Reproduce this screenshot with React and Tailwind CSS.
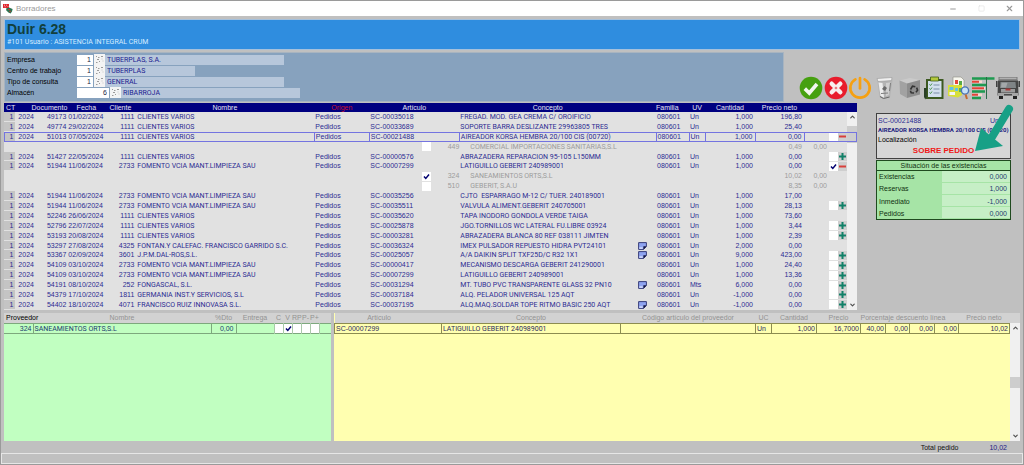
import { Fragment } from "react";
import { ChevronDown, ChevronUp, Minus, Square, X } from "lucide-react";

const fields = [
  { id: "empresa", label: "Empresa", code: "1", name: "TUBERPLAS, S.A.", codeW: "w-4", nameW: "w-[179px]" },
  { id: "centro", label: "Centro de trabajo", code: "1", name: "TUBERPLAS", codeW: "w-4", nameW: "w-[90px]" },
  { id: "tipo", label: "Tipo de consulta", code: "1", name: "GENERAL", codeW: "w-4", nameW: "w-[179px]" },
  { id: "almacen", label: "Almacén", code: "6", name: "RIBARROJA", codeW: "w-8", nameW: "w-[179px]" },
];

const FOMENTO = "FOMENTO VCIA MANT.LIMPIEZA SAU";

// mark: "+" can be expanded, "-" is expanded
const orders = [
  { doc: "49173", date: "01/02/2024", client: "1111", name: "CLIENTES VARIOS", art: "SC-00035018", text: "FREGAD. MOD. GEA CREMA C/ OROIFICIO", qty: "1,000", price: "196,80" },
  { doc: "49774", date: "29/02/2024", client: "1111", name: "CLIENTES VARIOS", art: "SC-00033689", text: "SOPORTE BARRA DESLIZANTE 29963805 TRES", qty: "1,000", price: "25,40" },
  {
    doc: "51013", date: "07/05/2024", client: "1111", name: "CLIENTES VARIOS", art: "SC-00021488", text: "AIREADOR KORSA HEMBRA 20/100 CIS (00720)", qty: "1,000", price: "0,00", mark: "-", selected: true,
    offers: [{ code: "449", name: "COMERCIAL IMPORTACIONES SANITARIAS,S.L", price: "0,49", dto: "0,00" }],
  },
  { doc: "51427", date: "22/05/2024", client: "1111", name: "CLIENTES VARIOS", art: "SC-00000576", text: "ABRAZADERA REPARACION 95-105 L150MM", qty: "1,000", price: "0,00", mark: "+" },
  {
    doc: "51944", date: "11/06/2024", client: "2733", name: FOMENTO, art: "SC-00007299", text: "LATIGUILLO GEBERIT 240989001", qty: "1,000", price: "0,00", mark: "-", checked: true,
    offers: [
      { code: "324", name: "SANEAMIENTOS ORTS,S.L", price: "10,02", dto: "0,00", checked: true },
      { code: "510", name: "GEBERIT, S.A.U", price: "8,35", dto: "0,00" },
    ],
  },
  { doc: "51944", date: "11/06/2024", client: "2733", name: FOMENTO, art: "SC-00035256", text: "CJTO  ESPARRAGO M-12 C/ TUER. 240189001", qty: "1,000", price: "17,00" },
  { doc: "51944", date: "11/06/2024", client: "2733", name: FOMENTO, art: "SC-00035511", text: "VALVULA ALIMENT.GEBERIT 240705001", qty: "1,000", price: "28,13", mark: "+" },
  { doc: "52246", date: "26/06/2024", client: "1111", name: "CLIENTES VARIOS", art: "SC-00035620", text: "TAPA INODORO GONDOLA VERDE TAIGA", qty: "1,000", price: "73,60" },
  { doc: "52796", date: "22/07/2024", client: "1111", name: "CLIENTES VARIOS", art: "SC-00025878", text: "JGO.TORNILLOS WC LATERAL FU.LIBRE 03924", qty: "1,000", price: "3,44", mark: "+" },
  { doc: "53193", date: "20/08/2024", client: "1111", name: "CLIENTES VARIOS", art: "SC-00003281", text: "ABRAZADERA BLANCA 80 REF 038111 JIMTEN", qty: "1,000", price: "2,39", mark: "+" },
  { doc: "53297", date: "27/08/2024", client: "4325", name: "FONTAN.Y CALEFAC. FRANCISCO GARRIDO S.C.", art: "SC-00036324", text: "IMEX PULSADOR REPUESTO HIDRA PVT24101", note: true, qty: "2,000", price: "0,00" },
  { doc: "53367", date: "02/09/2024", client: "3601", name: "J.P.M.DAL-ROS,S.L.", art: "SC-00025057", text: "A/A DAIKIN SPLIT TXF25D/C R32 1X1", note: true, qty: "9,000", price: "423,00", mark: "+" },
  { doc: "54109", date: "03/10/2024", client: "2733", name: FOMENTO, art: "SC-00000417", text: "MECANISMO DESCARGA GEBERIT 241290001", qty: "1,000", price: "24,40", mark: "+" },
  { doc: "54109", date: "03/10/2024", client: "2733", name: FOMENTO, art: "SC-00007299", text: "LATIGUILLO GEBERIT 240989001", qty: "1,000", price: "13,36", mark: "+" },
  { doc: "54191", date: "08/10/2024", client: "252", name: "FONGASCAL, S.L.", art: "SC-00031294", text: "MT. TUBO PVC TRANSPARENTE GLASS 32 PN10", note: true, unit: "Mts", qty: "6,000", price: "0,00", mark: "+" },
  { doc: "54379", date: "17/10/2024", client: "1811", name: "GERMANIA INST.Y SERVICIOS, S.L", art: "SC-00037184", text: "ALQ. PELADOR UNIVERSAL 125 AQT", qty: "-1,000", price: "0,00", mark: "+" },
  { doc: "54402", date: "18/10/2024", client: "4071", name: "FRANCISCO RUIZ INNOVASA S.L.", art: "SC-00037195", text: "ALQ.MAQ.SOLDAR TOPE RITMO BASIC 250 AQT", note: true, qty: "-1,000", price: "0,00", mark: "+" },
];

const totalLines = orders.reduce((n, o) => n + 1 + (o.offers ? o.offers.length : 0), 0);

const stock = [
  ["Existencias", "0,000"],
  ["Reservas", "1,000"],
  ["Inmediato", "-1,000"],
  ["Pedidos", "0,000"],
];

function Tick({ checked, label }) {
  return (
    <span className="grid h-[9px] w-[9px] place-items-center bg-white">
      <input
        type="checkbox"
        aria-label={label}
        defaultChecked={checked}
        className="peer col-start-1 row-start-1 h-[9px] w-[9px] appearance-none"
      />
      <svg viewBox="0 0 9 9" className="pointer-events-none invisible col-start-1 row-start-1 h-[9px] w-[9px] peer-checked:visible">
        <path d="M2 4.4 3.8 6.4 7 2.6" fill="none" stroke="#000070" strokeWidth="1.5" />
      </svg>
    </span>
  );
}

function Toggle({ mark }) {
  return (
    <button type="button" aria-label={mark === "+" ? "Desplegar" : "Plegar"} className="block h-[9px] w-[9px] bg-[#cfcfcf]">
      <svg viewBox="0 0 9 9" className="h-[9px] w-[9px]">
        {mark === "+" ? (
          <path d="M4.5 1v7M1 4.5h7" stroke="#128068" strokeWidth="2" />
        ) : (
          <path d="M1 4.5h7" stroke="#d8403c" strokeWidth="2" />
        )}
      </svg>
    </button>
  );
}

function NoteButton() {
  return (
    <button type="button" aria-label="Nota" className="ml-[2px] block">
      <svg viewBox="0 0 9 8" className="h-2 w-[9px]">
        <path d="M.6.6h7.8v4L5.6 7.4H.6z" fill="#8fa4f0" stroke="#2b2f6e" strokeWidth=".9" />
        <path d="M1.3 5.4h3.4v1.4H1.3z" fill="#dfe6ff" />
        <path d="M8.4 4.3H5.4v3.2z" fill="#14163c" />
      </svg>
    </button>
  );
}

function LookupButton() {
  return (
    <button type="button" aria-label="Buscar" className="ml-px h-[11px] w-[11px] bg-[#f4f4f4]">
      <svg viewBox="0 0 11 11" className="h-[11px] w-[11px]" fill="none" stroke="#9a9a9a">
        <path d="M2 2.5h1M4 3.5h1.5M7 2.5h2M3 5.5h2M2 8.5h1.5M5 7.5h1" strokeWidth="1" />
        <path d="M7.5 5h1M8.5 7h1" stroke="#c4c4c4" strokeWidth="1" />
      </svg>
    </button>
  );
}

function Scrollbar({ before, thumb }) {
  return (
    <div className="flex h-full w-full flex-col items-center bg-[#f0f0f0]">
      <ChevronUp className="h-[10px] w-[7px] shrink-0 text-[#505050]" strokeWidth={4} />
      <div className={before} />
      <div className={"w-full shrink-0 bg-[#cdcdcd] " + thumb} />
      <div className="flex-1" />
      <ChevronDown className="h-[10px] w-[7px] shrink-0 text-[#505050]" strokeWidth={4} />
    </div>
  );
}

function TitleBar() {
  return (
    <div className="flex h-[15px] items-center bg-white pl-[2px] text-[8px] text-[#9a9a9a]">
      <svg viewBox="0 0 10 10" className="mr-[3px] h-[10px] w-[10px]">
        <path d="M0 0h6v4H0z" fill="#e0242c" />
        <path d="M1 1.2h1M3 1.2h.8M4.6 2.4h.8M1.6 2.8h1" stroke="#fff" strokeWidth=".7" />
        <path d="M3 4.5 6 3.6 9.6 5 9 7.4 7.6 9.6 5.4 8.6 3.4 6.6z" fill="#2a7350" />
        <path d="M5 5.5h2M6 7.3h2" stroke="#c43a32" strokeWidth=".9" />
      </svg>
      <span className="flex-1">Borradores</span>
      <button type="button" aria-label="Minimizar" className="w-7">
        <Minus className="mx-auto h-2 w-2" strokeWidth={3} />
      </button>
      <button type="button" aria-label="Maximizar" className="w-7 text-[#e0e0e0]">
        <Square className="mx-auto h-[7px] w-[7px]" strokeWidth={2} />
      </button>
      <button type="button" aria-label="Cerrar" className="w-7">
        <X className="mx-auto h-[9px] w-[9px]" strokeWidth={3} />
      </button>
    </div>
  );
}

function Toolbar() {
  const btn = "block h-6 w-6 shrink-0";
  return (
    <div className="flex w-[236px] items-end justify-between pb-[2px] pl-[15px]">
      <button type="button" aria-label="Aceptar" className={btn}>
        <svg viewBox="0 0 24 24">
          <circle cx="12" cy="12" r="11.3" fill="#46a010" />
          <path d="M5.8 12.6 10.3 17 18 8" fill="none" stroke="#f2f6ee" strokeWidth="3.6" />
        </svg>
      </button>
      <button type="button" aria-label="Cancelar" className={btn}>
        <svg viewBox="0 0 24 24">
          <circle cx="12" cy="12" r="11.3" fill="#e81c2c" />
          <path d="M7.7 7.7l8.6 8.6M16.3 7.7l-8.6 8.6" stroke="#f8eeee" strokeWidth="4.4" strokeLinecap="round" />
          <path d="M12 10.4 13.6 12 12 13.6 10.4 12z" fill="#e86b72" />
        </svg>
      </button>
      <button type="button" aria-label="Salir" className={btn}>
        <svg viewBox="0 0 24 24" fill="none" stroke="#f5a012" strokeWidth="2.7" strokeLinecap="round">
          <path d="M7.4 3.4a9.7 9.7 0 1 0 9.2 0" />
          <path d="M12 2v10.5" />
        </svg>
      </button>
      <button type="button" aria-label="Papelera" className={btn}>
        <svg viewBox="0 0 24 24">
          <path d="M4 2.5 19 1.5 19.5 5 17 21.5 10 23 6.5 21z" fill="#b4b4b4" />
          <path d="M4 2.5 19 1.5 18.5 4.5 5 5.5z" fill="#f0f0f0" stroke="#9a9a9a" strokeWidth=".6" />
          <path d="M5.5 6.5 9.5 7 11 21.5 7.5 20z" fill="#ededed" />
          <path d="M13 7 17.5 6.5 15.6 19 13 20z" fill="#cfcfcf" />
          <path d="M9 13 11.5 10 14 12 12 15z" fill="#6a6a6a" />
          <path d="M8 17.5 15 17M17.5 7 16.5 15" stroke="#7d7d7d" strokeWidth="1" />
          <path d="M7 20.5 10.5 22.5 16.5 21" fill="none" stroke="#6a6a6a" strokeWidth="1" />
        </svg>
      </button>
      <button type="button" aria-label="Reciclar" className={btn}>
        <svg viewBox="0 0 24 24">
          <path d="M1.5 4.5 12 2 22 4 9 7.5z" fill="#cacaca" />
          <path d="M1.5 4.5 9 7.5V22L2 18z" fill="#a2a2a2" />
          <path d="M9 7.5 22 4V18.5L9 22z" fill="#8d8d8d" />
          <path d="M12.5 13.5l2-3.3 2.8.6M18.6 11.6l1 2.6-1.6 2M16 17l-2.8-.3-.8-2" fill="none" stroke="#333" strokeWidth="1.6" />
        </svg>
      </button>
      <button type="button" aria-label="Lista de tareas" className={btn}>
        <svg viewBox="0 0 24 24">
          <path d="M4 3h17.5v20H4z" fill="#3d5a22" />
          <path d="M6 5h13.5v16H6z" fill="#d3e0ee" />
          <path d="M8.5 1h8v4h-8z" fill="#b4c83c" stroke="#3f5a18" strokeWidth=".8" />
          <path d="M7.4 8.5l1.2 1 1.4-2M7.4 12.5l1.2 1 1.4-2M7.4 16.5l1.2 1 1.4-2" fill="none" stroke="#3a8a3a" strokeWidth=".9" />
          <path d="M11.5 9h6M11.5 13h6M11.5 17h6" stroke="#7d90a8" strokeWidth="1.1" />
          <path d="M2 12h2.6v9L3.3 23.5 2 21z" fill="#2a4028" />
        </svg>
      </button>
      <button type="button" aria-label="Consultar informe" className={btn}>
        <svg viewBox="0 0 24 24">
          <path d="M6 1h8l3 3v9H6z" fill="#f7f7ef" stroke="#8c8c80" strokeWidth=".6" />
          <path d="M1 9h14v10l-4 2.5L1 20z" fill="#d8df3a" />
          <path d="M8 4h3v4H8z" fill="#e0483c" />
          <path d="M12 5h3v4h-3z" fill="#58a848" />
          <path d="M2.5 11h4v3h-4zM8 12h3v3H8z" fill="#5fc3e6" />
          <path d="M2.5 16H8v3H2.5z" fill="#f4f4f4" />
          <path d="M12 12h4v4h-4z" fill="#58b05a" />
          <circle cx="18" cy="14.5" r="3.6" fill="#c9e2f8" stroke="#4a74b4" strokeWidth="1.4" />
          <path d="M18.6 18.5 20 23" stroke="#c46a32" strokeWidth="2" />
        </svg>
      </button>
      <button type="button" aria-label="Planificación" className={btn}>
        <svg viewBox="0 0 24 24">
          <path d="M1 2.5h22.5M1 9h15M1 15.5h13M1 22h9" stroke="#1e9a50" strokeWidth="2.4" />
          <path d="M1 5.7h10M1 12.2h13M1 18.8h10" stroke="#f6d8cc" strokeWidth="2.4" />
          <path d="M1 5.7h7M1 12.2h12M1 18.8h6" stroke="#e2433a" strokeWidth="2" />
          <path d="M15.5 1v22" stroke="#2b6a48" strokeWidth="1" />
        </svg>
      </button>
      <button type="button" aria-label="Transporte" className={btn}>
        <svg viewBox="0 0 24 24">
          <path d="M2.5 1h19v3.5H2.5z" fill="#7a7a7a" />
          <path d="M3.5 1.6h17v1.6h-17z" fill="#b0b0b0" />
          <path d="M2 4.5h20l.5 15h-21z" fill="#454545" />
          <path d="M4.5 6h15l.5 6H4z" fill="#7f8486" />
          <path d="M5.5 6.8h6l-1.5 4.6H5z" fill="#a4a8aa" />
          <path d="M5 13h14v3.5H5z" fill="#9c9c9c" />
          <path d="M9.5 12.5h5v2h-5z" fill="#a83c3c" />
          <path d="M2 17h20v3H2z" fill="#a6a6a6" />
          <path d="M8 18h8v1.5H8z" fill="#4a4a4a" />
          <path d="M3 20h4v3H3zM17 20h4v3h-4z" fill="#222" />
          <path d="M.8 5v6M23.2 5v6" stroke="#333" strokeWidth="1.4" />
        </svg>
      </button>
    </div>
  );
}

function OrdersTable() {
  return (
    <table className="h-[207px] min-w-0 flex-1 table-fixed border-collapse bg-[#e1e1e1] text-[#2c2c92]">
      <colgroup>
        <col className="w-[11px]" />
        <col className="w-[25px]" />
        <col className="w-[27px]" />
        <col className="w-[38px]" />
        <col className="w-[30px]" />
        <col className="w-[179px]" />
        <col className="w-[55px]" />
        <col className="w-[90px]" />
        <col />
        <col className="w-[20px]" />
        <col className="w-[33px]" />
        <col className="w-[16px]" />
        <col className="w-[50px]" />
        <col className="w-[49px]" />
        <col className="w-[25px]" />
        <col className="w-[9px]" />
        <col className="w-[9px]" />
        <col className="w-[10px]" />
      </colgroup>
      <thead>
        <tr className="h-[9px] bg-[#000080] text-[#e4e4f4] *:font-normal">
          <th className="pl-[2px] text-left">CT</th>
          <th colSpan={2} className="text-right">Documento</th>
          <th>Fecha</th>
          <th className="pr-[4px] text-right">Cliente</th>
          <th>Nombre</th>
          <th className="text-[#c8102c]">Origen</th>
          <th>Artículo</th>
          <th>Concepto</th>
          <th />
          <th className="text-left">Familia</th>
          <th>UV</th>
          <th>Cantidad</th>
          <th className="whitespace-nowrap">Precio neto</th>
          <th colSpan={4} />
        </tr>
      </thead>
      <tbody className="leading-[6px]">
        {orders.map((o, i) => {
          const line = o.selected ? " border-l border-[#7474e0]" : "";
          return (
            <Fragment key={i}>
              <tr className={"h-[9px] align-baseline whitespace-pre" + (o.selected ? " outline outline-1 -outline-offset-1 outline-[#7474e0]" : "")}>
                <td className="bg-[#c4c4c4] pt-[2px] pr-[2px] text-right shadow-[inset_0_-1px_#e1e1e1]">1</td>
                <td className="pl-[3px]">2024</td>
                <td className="pr-px text-right">{o.doc}</td>
                <td className="pl-px">{o.date}</td>
                <td className="pr-px text-right">{o.client}</td>
                <td className="pl-[2px] font-[Roboto]">{o.name}</td>
                <td className={"pl-px" + line}>Pedidos</td>
                <td className={"pl-px" + line}>{o.art}</td>
                <td className={"pl-px font-[Roboto]" + line}>{o.text}</td>
                <td className="align-middle">{o.note && <NoteButton />}</td>
                <td className={"pl-px" + line}>080601</td>
                <td className={"pl-px" + line}>{o.unit || "Un"}</td>
                <td className={"pr-[2px] text-right" + line}>{o.qty}</td>
                <td className={"pr-[2px] text-right" + line}>{o.price}</td>
                <td className={line} />
                <td className="align-middle">{o.mark && <Tick checked={o.checked} label={"Pedir " + o.art} />}</td>
                <td className="align-middle">{o.mark && <Toggle mark={o.mark} />}</td>
                {i === 0 && (
                  <td rowSpan={totalLines} className="h-px align-middle">
                    <Scrollbar before="h-1 shrink-0" thumb="h-[17px]" />
                  </td>
                )}
              </tr>
              {o.offers &&
                o.offers.map((s) => (
                  <tr key={s.code} className="h-[9px] align-baseline whitespace-pre text-[#9c9c9c]">
                    <td colSpan={7} />
                    <td className="align-middle">
                      <div className="flex items-center justify-end gap-[17px]">
                        <Tick checked={s.checked} label={"Proveedor " + s.name} />
                        <span>{s.code}</span>
                      </div>
                    </td>
                    <td className="pl-[11px] font-[Roboto]">{s.name}</td>
                    <td colSpan={4} />
                    <td className="pt-[2px] pr-[2px] text-right">{s.price}</td>
                    <td className="pr-[2px] text-right">{s.dto}</td>
                    <td colSpan={2} />
                  </tr>
                ))}
            </Fragment>
          );
        })}
      </tbody>
    </table>
  );
}

function ArticleCard() {
  return (
    <div className="relative border border-[#404040] bg-[#d6d6d6] px-px py-[2px]">
      <div className="flex justify-between pr-[10px] leading-[9px] text-[#2c2c92]">
        <span>SC-00021488</span>
        <span>Un</span>
      </div>
      <p className="font-[Roboto] text-[6px] leading-[9px] font-bold whitespace-nowrap text-[#1c1c80]">
        AIREADOR KORSA HEMBRA 20/100 CIS (00720)
      </p>
      <p className="leading-[12px] text-black">Localización</p>
      <p className="text-center text-[8px] leading-[10px] font-bold text-[#f01818]">SOBRE PEDIDO</p>
      <svg viewBox="0 0 40 48" className="absolute -top-[10px] -right-[4px] h-12 w-10">
        <path d="M35 5 18 33" stroke="#18a086" strokeWidth="8" strokeLinecap="round" />
        <path d="M1 47 7 24 29 42z" fill="#18a086" />
      </svg>
    </div>
  );
}

function StockTable() {
  return (
    <table className="mt-px h-[60px] w-full border border-[#1f4a1f] bg-[#a6e4a6] text-[#103010]">
      <thead>
        <tr className="h-[10px] border-b border-[#1f4a1f]">
          <th colSpan={2} className="font-normal">
            Situación de las existencias
          </th>
        </tr>
      </thead>
      <tbody>
        {stock.map(([label, value]) => (
          <tr key={label} className="h-[11px]">
            <th className="w-[65px] pl-[2px] text-left font-normal">{label}</th>
            <td className="bg-[#c6efc6] pr-[3px] text-right text-[#1c3c70] shadow-[inset_0_-1px_#a6e4a6]">{value}</td>
          </tr>
        ))}
      </tbody>
    </table>
  );
}

function SupplierPanel() {
  return (
    <div className="w-[327px] shrink-0 bg-[#c1ffc1]">
      <table className="w-full table-fixed border-collapse text-[#1c3c70]">
        <colgroup>
          <col className="w-[29px]" />
          <col />
          <col className="w-[25px]" />
          <col className="w-[38px]" />
          <col className="w-[9px]" />
          <col className="w-[9px]" />
          <col className="w-[9px]" />
          <col className="w-[9px]" />
          <col className="w-[9px]" />
          <col className="w-[12px]" />
        </colgroup>
        <thead>
          <tr className="h-[10px] bg-[#d2d2d2] whitespace-nowrap text-[#929292] *:font-normal">
            <th className="pl-[2px] text-left text-black">Proveedor</th>
            <th>Nombre</th>
            <th>%Dto</th>
            <th>Entrega</th>
            <th>C</th>
            <th>V</th>
            <th>RP</th>
            <th>P-</th>
            <th>P+</th>
            <th />
          </tr>
        </thead>
        <tbody>
          <tr className="h-[10px] border-y border-[#7da87d] align-baseline leading-[8px]">
            <td className="pt-px pr-px text-right">324</td>
            <td className="border-l border-[#7da87d] pl-px font-[Roboto]">SANEAMIENTOS ORTS,S.L</td>
            <td className="border-x border-[#7da87d] pr-[2px] text-right">0,00</td>
            <td />
            {["C", "V", "RP", "P-", "P+"].map((c) => (
              <td key={c} className="border-x border-[#a9c9a9] bg-white align-middle">
                <Tick checked={c === "V"} label={c} />
              </td>
            ))}
            <td />
          </tr>
        </tbody>
      </table>
    </div>
  );
}

function DetailPanel() {
  return (
    <div className="flex min-w-0 flex-1 bg-[#ffffb0]">
      <div className="min-w-0 flex-1">
        <table className="w-full table-fixed border-collapse text-[#2c2c60]">
          <colgroup>
            <col className="w-[107px]" />
            <col />
            <col className="w-[135px]" />
            <col className="w-[16px]" />
            <col className="w-[45px]" />
            <col className="w-[44px]" />
            <col className="w-[25px]" />
            <col className="w-[24px]" />
            <col className="w-[25px]" />
            <col className="w-[24px]" />
            <col className="w-[51px]" />
          </colgroup>
          <thead>
            <tr className="h-[10px] bg-[#d2d2d2] whitespace-nowrap text-[#929292] *:font-normal">
              <th className="pr-[18px]">Artículo</th>
              <th>Concepto</th>
              <th>Código artículo del proveedor</th>
              <th>UC</th>
              <th>Cantidad</th>
              <th>Precio</th>
              <th colSpan={4} className="pr-[18px]">Porcentaje descuento línea</th>
              <th>Precio neto</th>
            </tr>
          </thead>
          <tbody>
            <tr className="h-[10px] border-y border-[#8c8c50] align-baseline leading-[8px] *:border-x *:border-[#8c8c50] *:px-px">
              <td className="pt-px">SC-00007299</td>
              <td className="font-[Roboto]">LATIGUILLO GEBERIT 240989001</td>
              <td />
              <td>Un</td>
              <td className="text-right">1,000</td>
              <td className="text-right">16,7000</td>
              <td className="text-right">40,00</td>
              <td className="text-right">0,00</td>
              <td className="text-right">0,00</td>
              <td className="text-right">0,00</td>
              <td className="text-right">10,02</td>
            </tr>
          </tbody>
        </table>
      </div>
      <div className="w-[10px] border-t-10 border-[#d2d2d2]">
        <Scrollbar before="h-[44px] shrink-0" thumb="h-[11px]" />
      </div>
    </div>
  );
}

export default function App() {
  return (
    <div className="flex min-h-screen flex-col border border-[#9a9a9a] bg-[#c0c0c0] font-[Liberation_Sans,sans-serif] text-[7px] leading-[9px]">
      <TitleBar />
      <div className="flex flex-1 flex-col px-[3px] pt-[3px]">
        <header className="border border-[#a4c0dc] bg-[#2f8ddf] px-[2px] pt-px pb-[2px]">
          <h1 className="text-[14px] leading-[16px] font-bold text-[#12403c]">Duir 6.28</h1>
          <p className="font-[Roboto] leading-[10px] text-[#d4ecff]">#101 Usuario : ASISTENCIA INTEGRAL CRUM</p>
        </header>

        <div className="mt-[2px] flex">
          <form className="flex-1 border border-[#a8b4c0] bg-[#87a2be] px-[2px] pt-px pb-[3px]">
            {fields.map((f) => (
              <div key={f.id} className="flex h-[11px] items-center">
                <label htmlFor={f.id} className="w-[70px] text-black">
                  {f.label}
                </label>
                <input id={f.id} defaultValue={f.code} className={"h-[10px] bg-white pr-[2px] text-right text-[#202040] " + f.codeW} />
                <LookupButton />
                <input
                  aria-label={"Nombre de " + f.label}
                  readOnly
                  value={f.name}
                  className={"h-[10px] bg-[#b7c7db] pl-[2px] font-[Roboto] text-[#1c1c90] " + f.nameW}
                />
              </div>
            ))}
          </form>
          <Toolbar />
        </div>

        <div className="mt-px flex">
          <OrdersTable />
          <aside className="w-[163px] shrink-0 pt-[10px] pr-[9px] pl-[19px]">
            <ArticleCard />
            <StockTable />
          </aside>
        </div>

        <div className="mt-[3px] flex flex-1 gap-[3px]">
          <SupplierPanel />
          <DetailPanel />
        </div>

        <div className="flex h-3 items-center justify-end gap-[31px] pr-[13px]">
          <span className="text-[#101010]">Total pedido</span>
          <output className="text-[#1c1c80]">10,02</output>
        </div>
      </div>
      <footer className="h-[11px] border border-[#e6e6e6]" />
    </div>
  );
}
